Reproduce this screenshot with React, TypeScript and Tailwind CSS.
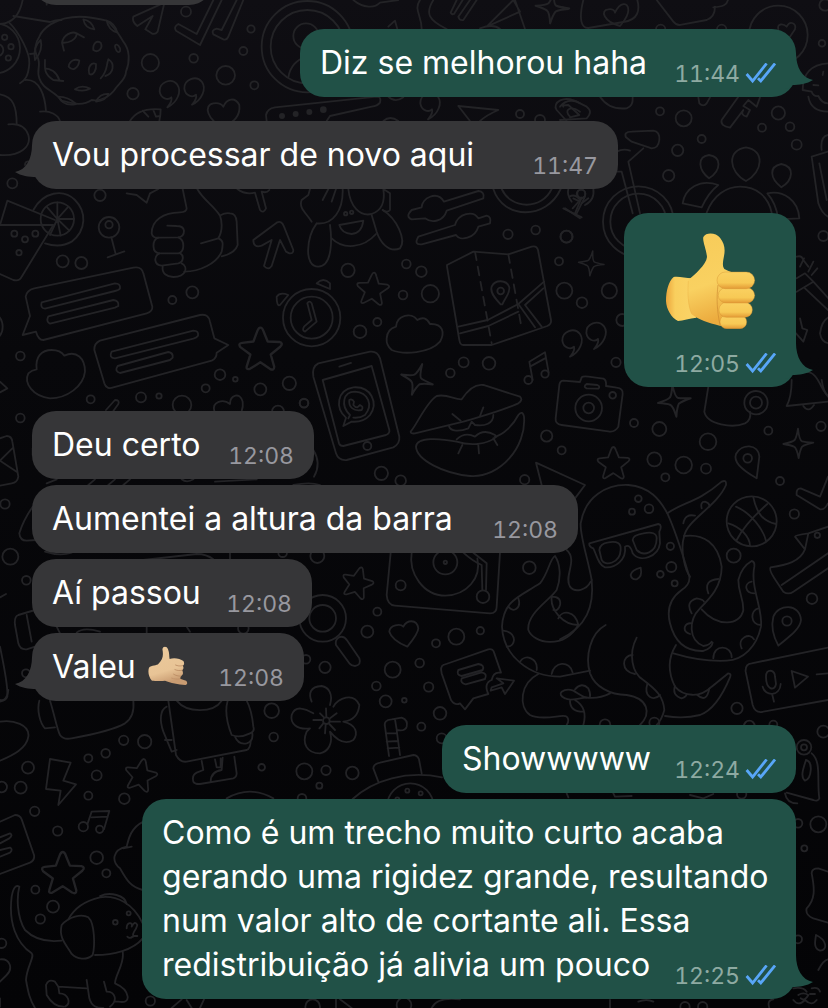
import type { ReactNode } from 'react';

type Dot = [number, number, number];

/* One patch of the wallpaper, drawn on a grid three times finer than the page. */
function Patch({ x, y, dots, lines, children }: { x: number; y: number; dots: Dot[]; lines: string[]; children?: ReactNode }) {
  return (
    <g transform={`translate(${x} ${y}) scale(0.33333)`}>
      {dots.map(([cx, cy, r], i) => (
        <circle key={i} cx={cx} cy={cy} r={r} />
      ))}
      {lines.map((d, i) => (
        <path key={i} d={d} />
      ))}
      {children}
    </g>
  );
}

const STAR = 'M0,-50 Q5,-50 8,-40 L17,-18 L44,-17 Q54,-14 46,-6 L24,12 L32,40 Q32,50 22,45 L0,30 L-24,45 Q-34,48 -31,38 L-23,12 L-46,-5 Q-52,-14 -42,-15 L-16,-18 L-7,-42 Q-4,-50 0,-50 Z';
const SPARK = 'M0,-44 Q4,-8 12,-6 Q20,-4 46,-2 Q20,4 12,10 Q6,20 2,44 Q-4,14 -12,10 Q-20,6 -44,2 Q-16,-4 -10,-10 Q-4,-18 0,-44 Z';
const COMMA = 'M-8,40 C22,26 36,-8 22,-28 C4,-50 -32,-36 -31,-8 C-28,14 -6,20 4,10 C8,22 0,30 -8,40 Z';

function Shape({ d, x, y, r = 0, s = 1 }: { d: string; x: number; y: number; r?: number; s?: number }) {
  return <path d={d} transform={`translate(${x} ${y}) rotate(${r}) scale(${s})`} />;
}

function Wallpaper() {
  return (
    <svg
      aria-hidden="true"
      className="pointer-events-none absolute left-0 top-0"
      width="828"
      height="1008"
      viewBox="0 0 828 1008"
      fill="none"
      stroke="#232326"
      strokeWidth="5.5"
      strokeLinecap="round"
      strokeLinejoin="round"
    >
      {/* cookie, quotes, ticks */}
      <Patch
        x={0}
        y={0}
        dots={[[558, 35, 15], [753, 87, 11], [730, 153, 12], [451, 188, 26], [581, 175, 13], [677, 226, 28], [763, 256, 12], [399, 281, 17], [37, 550, 15], [300, 586, 17], [14, 112, 8], [33, 140, 8], [25, 174, 8], [-15, 145, 75], [-8, 150, 18]]}
        lines={[
          'M118,110 C130,80 170,60 195,55 C240,45 275,52 320,62 C350,85 360,110 370,125 C390,150 390,185 378,215 C378,240 350,255 345,268 C330,290 300,305 275,300 C250,318 220,312 185,302 C160,270 130,270 118,235 C108,210 125,195 112,170 C100,150 108,125 118,110 Z',
          'M250,58 Q275,62 283,88 Q255,85 250,58 Z',
          'M320,62 Q345,70 352,98 Q325,90 320,62 Z',
          'M186,128 C190,105 215,92 230,100 L252,112 M230,100 C230,120 205,130 186,128 L192,152',
          'M280,150 C278,130 290,120 302,128 C310,145 295,160 280,150 Z',
          'M345,140 C345,130 355,132 360,145 C364,160 350,162 345,140 Z',
          'M206,200 C208,182 225,175 238,182 C235,205 218,215 206,200 Z',
          'M268,222 C262,200 275,185 288,192 C290,210 280,228 268,222 Z',
          'M325,178 C345,190 342,220 316,228 M325,178 C318,200 322,215 302,235',
          'M135,180 C135,205 130,220 160,240 L190,243 M135,205 C150,205 170,215 178,240',
          'M225,268 Q245,253 270,266 Q250,277 225,268 Z',
          'M175,290 Q205,290 228,312 Q190,320 175,290 Z',
          'M288,305 Q300,280 326,282 Q318,302 288,305 Z',
          'M105,180 Q98,140 122,120 Q130,150 105,180 Z',
          'M40,48 L150,66 Q165,60 185,60',
          'M25,65 C60,100 90,160 88,190 C85,230 75,240 60,250',
          'M68,0 C60,40 40,70 0,72',
          'M90,162 L108,160',
          'M0,465 C60,470 95,440 85,405 C75,375 50,370 25,373',
          'M50,372 C50,320 40,290 0,283',
          'M75,240 C120,235 135,290 138,333',
          'M120,335 C150,330 175,345 180,363',
          'M665,0 L600,135 L528,92 Q520,80 535,72 L590,102 L640,0',
          'M730,0 L685,110 Q680,122 670,118 L640,103 Q633,90 650,86 L665,90 L710,0',
          'M495,0 L473,95 Q465,105 455,100 L436,88 L458,48 L412,78 Q395,65 400,50 L480,14',
          'M672,382 C620,360 610,315 640,310 C655,308 665,312 670,320 C680,295 705,290 718,315 C722,350 700,365 672,382',
          'M390,363 C410,330 450,325 482,328 Q482,345 478,363 M428,332 L445,350 M460,330 L468,350 L480,348',
          'M140,0 L140,14',
          'M75,495 C75,485 85,480 95,490',
        ]}
      >
        <Shape d={COMMA} x={510} y={282} />
        <Shape d={COMMA} x={584} y={274} />
      </Patch>

      {/* avatar disc, cutlery */}
      <Patch
        x={180}
        y={0}
        dots={[[382, 140, 137], [382, 140, 110], [378, 108, 38], [1020, 342, 12], [1080, 360, 15]]}
        lines={[
          'M325,232 C330,200 350,178 377,172',
          'M262,380 L258,345 Q262,325 285,322 L590,290 Q605,290 600,308 Q592,318 575,320 L450,348 L440,363',
          'M520,0 C550,25 585,25 600,8 L655,0',
          'M720,0 C700,30 725,45 725,87 M760,0 C735,40 745,60 800,87',
          'M830,0 L812,38 Q815,45 822,42 L848,0 M870,0 L835,50 Q838,62 850,60 L890,0',
          'M920,80 L1000,0 L1020,35 Z M1005,0 L1035,87 M900,85 Q940,70 960,87',
          'M625,80 L645,62 L652,87 M625,290 Q645,310 670,292',
          'M835,318 L955,330 Q920,345 900,363 M835,318 L870,363',
          'M1200,310 C1150,280 1115,310 1130,330 L1160,363 M1200,335 C1170,315 1150,330 1170,350',
          'M610,363 Q630,345 655,363',
        ]}
      >
        <g fill="#232326" stroke="none">
          <circle cx="306" cy="348" r="9" />
          <circle cx="347" cy="342" r="9" />
          <circle cx="388" cy="336" r="9" />
          <circle cx="430" cy="329" r="10" />
        </g>
        <Shape d={COMMA} x={752} y={318} />
        <Shape d={SPARK} x={1115} y={22} r={8} s={1.1} />
      </Patch>

      {/* top right */}
      <Patch
        x={560}
        y={0}
        dots={[[786, 130, 10], [795, 15, 17], [302, 88, 14], [485, 88, 14], [371, 355, 24], [300, 334, 12], [655, 339, 20], [606, 383, 12], [690, 380, 13], [425, 417, 12], [353, 451, 17], [710, 434, 15], [326, 527, 17], [20, 710, 18], [655, 105, 88], [790, 708, 15], [63, 582, 13], [235, 665, 106], [235, 665, 84]]}
        lines={[
          'M70,0 C55,60 65,85 85,84 L190,66 C235,60 240,30 232,0',
          'M180,78 C130,65 120,30 145,28 C155,26 165,30 165,38 C180,5 205,5 205,30 C205,50 190,65 180,78 Z',
          'M290,0 L340,65 Q350,78 365,74 L440,60 Q465,50 465,20 M460,22 C490,20 500,15 504,0',
          'M655,88 C650,70 670,70 680,80 C690,60 710,70 705,88 L690,110',
          'M0,20 L28,25',
          'M0,320 Q20,295 50,305 L80,320 Q100,335 80,355 L0,360 M10,320 Q5,315 25,315 L58,345 L30,352',
          'M120,290 C140,320 170,328 200,325 Q220,318 218,292',
          'M415,292 L418,310 Q430,322 440,310 L450,292',
          'M535,290 L485,360 Q480,378 510,383 L550,330 Q540,345 560,350 L570,330 L550,318 L565,300 L590,320 L600,292',
          'M198,412 Q190,395 215,395 L280,392 Q300,395 298,420 Q295,445 275,445 L215,425 Z',
          'M250,445 L205,485 L240,640 M172,515 L185,515 L218,640 M170,455 Q190,445 210,452',
          'M447,535 C415,510 410,470 447,465 C485,470 485,510 447,535 Z',
          'M558,543 C505,515 500,450 558,442 C615,450 610,515 558,543 Z',
          'M664,562 C630,535 625,500 664,492 C705,500 700,540 664,562 Z',
          'M368,610 C375,565 420,535 475,555 C455,570 440,590 425,622 Z',
          'M440,638 C460,585 500,560 540,560 C590,560 625,590 635,638',
          'M622,580 C670,570 715,600 718,655 L655,658 C650,620 640,600 622,580 Z',
          'M728,270 Q728,195 804,190 M728,270 L755,275 Q760,290 775,288 Q785,310 804,310 M745,290 C750,320 770,335 804,335 M790,215 L788,225 M760,255 L775,256',
          'M755,470 L804,455 M755,470 L775,610 Q785,640 804,650 M778,490 L800,600 M785,450 Q780,410 804,405',
          'M28,590 Q45,580 60,600 L38,625 M15,625 L60,655 M75,590 L50,640 M100,565 Q105,600 75,615',
        ]}
      />

      {/* drink, chat cards, cloud */}
      <Patch
        x={0}
        y={180}
        dots={[[188, 244, 18], [244, 249, 18], [517, 360, 12], [577, 337, 18], [61, 528, 13], [272, 658, 12], [423, 652, 15], [477, 648, 8], [546, 675, 28], [617, 625, 12], [660, 584, 16], [706, 598, 7], [781, 628, 18], [868, 610, 20], [912, 669, 13], [834, 695, 18], [61, 714, 13], [43, 161, 9], [75, 178, 9], [106, 161, 9], [57, 218, 8], [327, 142, 31], [327, 134, 11], [172, 117, 50], [935, 413, 86], [935, 413, 63], [-40, 440, 48]]}
        lines={[
          'M0,135 L22,62 L165,120 M0,135 L160,135 L65,290 Q58,305 40,300 L0,282',
          'M100,90 C130,35 190,25 225,60 C260,95 260,150 215,185 Q180,205 135,190',
          'M172,117 L172,67 M172,117 L205,80 M172,117 L222,117 M172,117 L208,152 M172,117 L182,167 M172,117 L150,165 M172,117 L140,80',
          'M334,172 L347,222 M323,232 L373,214',
          'M103,325 L400,263 Q425,258 430,280 L457,380 Q458,395 440,400 L130,480 Q115,480 108,455 L68,465 L90,408 L77,350 Q80,330 103,325 Z',
          'M125,367 L345,310 Q362,310 360,325 Q358,330 345,333 L135,386 Q120,385 125,367 Z',
          'M145,409 L340,360 Q358,362 355,378 L345,383 L150,431 Q137,425 145,409 Z',
          'M300,482 L600,405 Q625,400 630,425 L643,475 L685,495 L650,518 Q650,535 635,542 L340,622 Q320,630 313,610 L283,510 Q282,490 300,482 Z',
          'M335,515 L580,452 Q597,452 594,467 Q590,473 580,476 L345,535 Q325,533 335,515 Z',
          'M353,558 L505,516 Q520,518 518,533 L510,540 L360,579 Q342,573 353,558 Z',
          'M110,568 C105,530 125,510 155,510 C175,510 185,515 193,527 C230,510 255,535 255,575 C250,620 200,655 150,655 C100,650 70,610 85,580 Q95,570 110,568 Z',
          'M380,40 L410,45 L440,68 L450,40 L475,27',
          'M548,27 L560,85 Q560,97 540,97 C490,98 455,120 455,160 Q458,175 475,173 L535,172 Q552,170 552,152 Q550,138 530,138 L502,137',
          'M475,173 C455,180 455,218 478,220 L535,220 C555,215 555,180 535,172',
          'M478,220 C460,230 462,255 485,257 L535,250 C552,245 552,225 540,220',
          'M488,260 C485,280 500,290 520,291 C560,290 565,260 545,250',
          'M553,275 C600,275 650,250 665,215 C670,190 670,180 655,175 L603,190 M655,175 C670,150 665,120 660,107 C640,75 610,60 592,27',
          'M663,105 Q675,98 690,100 Q708,100 710,125 L713,195 Q705,220 665,229',
          'M712,27 Q735,45 765,38 L780,90 Q790,102 798,85 L785,35 Q800,40 808,30',
          'M760,180 L830,128 Q845,120 852,140 L880,210 Q880,222 868,220 L858,215 L840,180 L815,258 Q805,272 792,258 L815,180 L785,197 Q760,205 760,180 Z',
          'M830,350 Q840,335 865,345 L840,375 Q830,380 830,350 Z',
          'M950,310 Q970,290 990,310 L990,327 Z',
          'M922,370 Q928,360 935,370 L950,425 L915,455 Q905,452 912,440 L935,420 Z',
          'M643,693 C635,665 670,655 690,672 C690,645 720,635 728,665 Q730,680 725,693',
          'M318,690 L345,660 Q360,660 355,672 L340,693',
          'M0,605 L22,625 L0,637',
        ]}
      >
        <Shape d={STAR} x={781} y={508} s={1.3} />
      </Patch>

      {/* map, phone, lips, camera */}
      <Patch
        x={300}
        y={170}
        dots={[[144, 301, 20], [319, 282, 13], [364, 305, 16], [391, 371, 26], [309, 375, 13], [180, 485, 19], [232, 456, 12], [624, 193, 14], [707, 180, 13], [799, 200, 18], [777, 274, 12], [793, 362, 24], [846, 398, 16], [928, 362, 23], [967, 450, 18], [948, 577, 14], [491, 577, 15], [451, 609, 13], [567, 580, 19], [12, 700, 13], [740, 798, 17], [785, 841, 12], [202, 828, 12], [866, 714, 40], [866, 714, 16], [938, 676, 10], [602, 363, 10], [844, 71, 12], [137, 131, 5], [155, 127, 5], [685, 630, 12], [735, 612, 11]]}
        lines={[
          'M5,90 L25,75 L30,57 M5,90 C-5,115 20,130 35,155 M50,160 C100,165 130,120 128,57 M50,160 C20,200 10,290 55,290 C100,288 95,200 90,165 M68,90 L85,57 M95,95 L108,57',
          'M145,57 C150,110 180,140 215,132 C250,120 255,90 250,57 L270,70 L270,120 Q262,130 248,120',
          'M248,120 C290,145 320,210 300,235 C265,250 240,215 230,185 L215,135',
          'M95,205 C130,240 190,235 228,192',
          'M118,165 L190,152 Q185,190 155,192 Q125,190 118,165 Z',
          'M335,120 L365,112 C365,85 410,60 432,95 L535,63 Q555,65 550,85 L440,122 C430,155 395,160 375,145 L335,148 Q315,140 335,120 Z',
          'M355,200 L465,165 C475,130 520,120 535,145 L560,137 Q575,140 570,160 L535,170 C525,205 480,215 468,195 L365,223 Q340,225 355,200 Z',
          'M580,57 C610,150 740,150 782,57 M605,57 C635,120 725,120 755,57',
          'M441,285 L520,245 L625,253 L695,230 Q710,226 714,240 L753,450 Q755,462 742,468 L575,525 L490,525 Q480,525 478,510 L441,290 Z',
          'M475,470 L563,450 L655,402 L732,335 M480,490 L565,468 L655,425 M730,355 L675,405 L725,470 M655,402 L705,472',
          'M602,403 C580,380 570,365 575,350 C585,328 620,328 628,352 C630,370 615,385 607,403 Z',
          'M260,505 C262,480 280,472 288,470 C290,435 335,425 352,450 Q375,435 390,462 C430,460 435,490 420,515 C390,550 310,555 275,540 Q258,525 260,505 Z',
          'M55,580 L210,545 Q232,542 240,565 L298,800 Q300,822 280,832 L140,870 Q115,872 108,850 L40,620 Q35,590 55,580 Z',
          'M68,630 L215,588 L268,780 Q270,790 258,795 L130,828 Q120,828 117,820 Z M118,590 L153,579',
          'M130,768 L138,743 C105,715 110,660 160,652 C215,648 235,700 210,735 Q190,758 155,755 Z M145,745 L150,735 C120,705 130,665 165,665 C205,668 220,705 195,735 Q180,745 160,743',
          'M148,690 Q155,685 162,695 L160,705 Q165,712 172,712 L180,705 Q192,710 185,720 C160,725 145,710 148,690 Z',
          'M332,785 C350,765 380,695 410,678 C440,670 465,690 485,688 C500,665 520,640 550,645 L660,680 Q670,690 655,700 C600,725 540,740 490,755 L345,790 Q332,792 332,785 Z',
          'M457,732 L482,752 M550,712 L540,738 M447,768 C450,785 480,785 505,775 L515,755 L525,765 C555,770 580,760 580,735',
          'M470,808 Q495,785 525,800 Q550,775 585,795 M470,815 C510,828 560,825 590,800 M470,815 C420,805 350,800 348,830 C350,870 430,910 510,918 C600,925 680,830 672,740 Q668,720 655,735 C640,765 610,795 585,800 M487,825 L475,850 M535,825 L537,850 M580,805 L592,825',
          'M790,632 L840,636 L845,622 Q850,618 865,620 L910,626 Q920,630 918,648 L950,653 Q970,655 968,672 L955,770 Q945,788 925,784 L785,765 Q765,762 767,745 L778,645 Q780,632 790,632 Z',
          'M860,642 L892,645 Q902,650 895,656 L860,655 Q848,650 860,642 Z',
          'M698,630 L688,575 L735,547 L746,608 M690,590 L735,565',
          'M790,115 L845,142 M845,83 L825,130 M820,85 L840,95 M865,85 L845,100 M805,57 Q800,75 815,95',
          'M708,878 L855,945 L825,985 M708,878 L725,945',
          'M40,840 Q65,880 42,920',
        ]}
      >
        <path d="M525,245 L575,520 M625,253 L665,475" strokeDasharray="26 20" />
        <Shape d={STAR} x={218} y={357} s={0.98} r={5} />
        <Shape d={SPARK} x={873} y={280} s={0.85} r={8} />
        <Shape d={SPARK} x={350} y={628} s={1.1} r={20} />
        <Shape d={COMMA} x={818} y={520} />
        <Shape d={COMMA} x={890} y={497} />
      </Patch>

      {/* right edge between the bubbles */}
      <Patch
        x={600}
        y={200}
        dots={[[720, 265, 25]]}
        lines={[
          'M590,170 Q605,165 610,180 L625,200 M600,200 L612,175 M625,215 L640,185 M635,225 L652,205 M590,235 L615,220 L640,245 L590,275 M640,245 L690,300 M615,265 L684,330',
          'M600,355 L607,385 L622,390 L610,425 L588,400',
          'M660,400 Q665,360 690,350 M660,400 Q665,430 690,430',
          'M612,515 C660,510 660,580 690,590',
        ]}
      />

      {/* octopus, ball, shoe */}
      <Patch
        x={560}
        y={380}
        dots={[[222, 129, 12], [298, 147, 21], [283, 238, 21], [371, 255, 25], [316, 292, 12], [438, 266, 15], [444, 185, 25], [625, 152, 12], [783, 139, 14], [660, 303, 12], [703, 402, 14], [235, 356, 10], [267, 386, 13], [216, 395, 9], [331, 499, 11], [334, 561, 15], [301, 583, 10], [344, 610, 9], [521, 527, 21], [756, 656, 16], [563, 235, 13], [681, 723, 14], [531, 985, 17], [588, 68, 35], [588, 68, 18], [575, 424, 75]]}
        lines={[
          'M445,20 L433,95 C440,135 520,145 555,130 Q575,120 570,95',
          'M695,0 Q695,50 680,78 L804,65 M730,78 Q745,100 762,75 M785,0 Q790,35 804,50',
          'M590,295 C540,265 520,245 528,222 C545,190 595,190 598,230 Z',
          'M655,797 C635,760 635,730 640,710 C655,670 720,670 723,720 C720,750 680,775 655,797 Z',
          'M528,380 C575,400 610,450 618,482 M580,352 C590,400 610,425 648,432 M622,372 C590,400 550,440 530,480 M505,430 C540,440 570,470 570,498',
          'M95,600 C85,540 60,470 62,430 C75,350 140,312 205,315 C270,320 300,360 322,400 C350,460 370,530 388,590 C390,610 380,620 365,630 C330,655 320,690 330,730 C345,790 380,815 430,813 Q455,805 458,788',
          'M322,400 C370,365 410,370 485,305 Q500,298 498,315 C470,380 380,420 372,470',
          'M372,468 C430,460 475,490 485,560 C485,620 450,655 420,685 C385,720 385,780 430,798 Q450,795 455,785',
          'M372,470 C360,510 375,570 390,590',
          'M425,688 C470,740 540,740 550,690 C550,650 535,640 535,600 Q545,560 575,543 Q585,545 583,560 C570,620 610,690 603,740 C590,800 550,840 500,842 C440,845 390,835 340,820',
          'M348,795 C320,840 325,880 345,920 C370,950 420,955 455,920 L505,880 Q515,880 510,892 C490,940 460,990 420,1005 Q370,1018 315,1008',
          'M88,490 L295,432 Q308,435 298,455 L300,490 C295,530 240,550 218,520 Q210,490 195,500 C200,540 165,565 135,562 C115,555 110,525 100,505 Q86,500 88,490 Z',
          'M118,510 Q120,490 145,487 Q185,480 182,510 C180,550 135,560 125,540 Z M218,480 Q218,465 250,460 Q290,452 290,475 C290,520 250,530 230,510 Z',
          'M212,585 Q215,570 242,563 Q248,590 230,598 Q215,600 212,585 Z',
          'M95,600 C103,680 80,740 0,778',
          'M137,735 C90,760 75,830 90,880 C105,920 150,945 200,945 C265,955 275,1000 240,1035',
          'M230,773 C205,820 215,880 250,900 C290,930 310,950 313,990 Q305,1020 290,1035',
          'M218,825 C185,825 180,875 225,882 M262,912 C250,950 280,965 300,945 M345,918 Q335,945 365,955 Q380,950 380,942 M412,945 Q440,970 448,925',
          'M370,430 Q375,400 405,407 M425,385 Q420,365 435,365 Q450,370 448,380 M445,640 Q430,600 475,597 M395,700 Q375,665 410,655 Q430,658 432,665 M390,762 Q370,755 375,740 Q380,728 395,730 M460,835 C460,790 515,795 515,832 M545,805 C530,775 570,755 582,778 M603,735 C570,735 570,690 595,685 M583,640 C555,640 550,610 575,605',
          'M150,940 C125,953 95,955 75,952',
          'M804,440 L745,460 Q705,465 705,470 L735,508 L745,460 M735,508 C720,545 680,555 632,562 Q625,570 650,605 L670,635 Q685,645 700,635 L804,565 M665,615 L804,520',
          'M710,345 L780,388 Q795,390 804,370 M710,345 Q708,325 722,325 L780,350 L804,290',
          'M804,803 L575,850 Q555,852 557,875 L578,975 Q585,998 605,996 L804,960',
          'M618,890 Q618,872 632,872 Q645,875 645,890 L648,912 Q645,928 632,925 Q618,918 618,890 Z M608,920 C615,950 660,950 662,912 M637,945 L642,965 M695,873 L744,890 L705,923 Z M770,883 L804,880',
        ]}
      >
        <circle cx="772" cy="466" r="8" />
        <Shape d={STAR} x={160} y={250} s={0.98} />
        <Shape d={SPARK} x={342} y={62} s={1.1} r={-6} />
        <Shape d={SPARK} x={714} y={190} />
      </Patch>

      {/* left margin */}
      <Patch
        x={0}
        y={370}
        dots={[[15, 402, 14], [31, 560, 24], [79, 631, 13], [968, 745, 70], [968, 745, 40], [918, 868, 13], [78, 910, 12], [730, 775, 16], [848, 548, 13]]}
        lines={[
          'M0,205 L20,198 Q35,198 37,215 L55,320 Q52,338 35,340 L0,347 M40,232 L0,272 L50,305 M98,235 L98,255',
          'M98,410 Q70,450 58,490 Q60,512 80,512 L110,510',
          'M140,340 L170,328 M265,345 L285,328 M325,345 L345,328 M370,345 L390,328 M545,328 Q560,340 580,328 M645,335 L770,328 M880,345 Q930,335 960,345',
          'M135,545 Q180,560 215,548 M430,570 L590,552 Q620,552 640,568 M690,548 L690,568',
          'M0,682 L18,672 M105,720 L55,735 Q42,740 45,765 L55,820 Q60,840 80,838 L105,830 M80,735 L95,815',
          'M170,770 L180,790 M230,788 Q250,770 300,785 M440,770 L440,788 M560,770 L570,785',
          'M0,830 Q25,950 22,980 Q20,990 0,995',
        ]}
      />

      {/* turntable, magnifier, tentacle */}
      <Patch
        x={300}
        y={450}
        dots={[[244, 70, 20], [302, 92, 16], [674, 89, 14], [302, 406, 15], [52, 318, 21], [688, 353, 19], [232, 485, 12], [202, 545, 18], [408, 580, 12], [469, 560, 24], [541, 542, 11], [359, 639, 13], [278, 659, 24], [75, 652, 17], [386, 711, 14], [229, 708, 13], [436, 337, 36], [436, 337, 5], [549, 440, 19]]}
        lines={[
          'M272,308 L260,435 Q262,465 285,467 L570,490 Q590,490 590,470 L600,308',
          'M335,308 C325,370 370,437 436,437 C500,435 545,385 532,325',
          'M490,308 Q520,335 545,345 L547,420 M520,308 L560,340 L558,420',
          'M115,563 Q130,555 142,572 L178,625 Q185,645 165,648 Q155,648 148,640 L108,585 Q105,570 115,563 Z',
          'M322,590 Q275,570 268,545 C270,525 300,520 310,530 C320,510 350,505 355,535 Q355,550 322,590 Z',
          'M430,645 L565,598 Q580,595 583,610 L603,668 M430,645 Q420,650 425,670 L453,750 Q465,768 480,760 L495,778 L520,745 L565,732 Q550,700 575,690 Q580,665 600,668',
          'M475,660 L535,642 Q555,645 548,660 L485,678 Q468,675 475,660 Z M485,685 L545,667 Q563,670 555,687 L497,703 Q480,700 485,685 Z',
          'M575,712 L610,700 L590,685 L642,692 L615,732 L605,712 L572,722 Z',
          'M835,525 C790,600 700,580 685,540 C680,490 750,450 770,420 C785,380 780,340 765,318 C750,325 745,370 720,400 C660,440 610,450 606,530 C610,620 690,680 780,680 L870,662',
          'M800,300 C835,330 790,380 810,410 C825,430 860,420 872,395',
          'M625,470 C640,490 665,475 655,445 M610,542 Q640,545 642,570 Q640,590 620,590 M660,635 C675,610 715,625 710,660 M755,672 C760,635 810,630 818,668 M755,440 Q785,440 780,465 Q775,485 760,480 M775,505 C785,480 825,480 835,525 C790,525 750,480 755,440',
          'M715,672 C660,700 655,770 690,795 C730,815 790,790 800,800 Q810,810 800,825 M855,743 C830,745 810,755 795,745 Q775,735 785,725 Q800,715 820,722 C835,730 845,740 860,743 M825,718 Q845,695 865,715 Q872,730 870,740 M810,752 Q810,785 850,785 M825,750 C850,765 860,790 850,825',
        ]}
      >
        <Shape d={STAR} x={172} y={398} s={0.95} r={15} />
      </Patch>

      {/* lower left: robot, flower, puppy */}
      <Patch
        x={0}
        y={690}
        dots={[[84, 233, 18], [5, 291, 16], [62, 293, 18], [265, 205, 12], [317, 190, 13], [371, 151, 14], [434, 155, 20], [290, 256, 15], [265, 317, 12], [373, 326, 16], [104, 364, 14], [173, 423, 14], [290, 503, 19], [319, 550, 12], [106, 599, 12], [159, 650, 18], [121, 687, 14], [815, 62, 22], [821, 141, 13], [785, 232, 10], [913, 244, 24], [978, 241, 14], [1057, 249, 19], [958, 287, 9], [906, 325, 13], [1157, 34, 18], [1213, 31, 7], [1264, 110, 12], [1320, 70, 19], [1325, 145, 15], [979, 92, 10], [451, 933, 14], [346, 697, 7], [386, 670, 6], [5, 760, 14], [1231, 350, 70], [1222, 302, 6], [1262, 310, 6], [1192, 328, 6], [1212, 945, 22], [938, 950, 22], [250, 410, 14], [299, 418, 11]]}
        lines={[
          'M0,95 C40,88 90,105 85,140 C80,175 40,195 0,212',
          'M118,32 C110,60 120,100 135,115 L165,112 M150,32 C165,80 170,115 180,135 Q190,150 215,145 C270,135 340,120 375,100 Q405,80 400,32',
          'M0,30 Q20,35 25,0',
          'M150,207 L212,218 L190,272 L228,283 L175,345 L182,302 L138,297 Z',
          'M262,403 L275,365 L328,363 L312,418 M275,382 L322,380',
          'M0,395 L45,375 Q60,375 65,388 L102,495 Q105,510 90,518 L0,552 M0,460 L28,445 Q40,435 30,430 L0,442 M0,500 L30,488 Q40,478 30,473 L0,480',
          'M505,32 L528,195 Q540,218 560,215 L740,180 Q752,175 752,152 M500,50 C480,60 478,90 490,125 L515,185 L530,180 M495,150 L515,150',
          'M530,32 C560,70 640,70 665,32 M683,32 C672,70 685,110 695,135 Q720,145 750,130 Q765,125 760,110 Q755,60 740,32 M705,140 Q715,165 740,160 Q760,155 757,130',
          'M605,213 L610,240 L590,248 Q575,255 580,275 Q585,283 600,282 L700,265 Q710,262 710,250 L703,200 M645,208 L650,232 L662,232 L662,205 M632,275 Q632,245 665,240 L668,203',
          'M935,35 C925,10 930,-10 965,-12 C985,-8 1000,10 990,45 M1000,50 C1015,25 1060,5 1078,45 C1075,80 1055,92 1030,95 C1070,105 1075,130 1060,150 C1035,165 1010,150 990,125 C1000,160 985,185 960,190 C920,190 905,160 920,125 L930,115 C890,120 870,100 875,75 C885,45 915,55 940,70 M940,90 L965,90 M960,70 L972,82 M978,55 L979,80 M1010,70 L990,85 M1020,95 L992,95 M1005,120 L988,102 M975,130 L977,105 M958,115 L970,100',
          'M1155,110 Q1150,90 1175,88 L1205,83 Q1225,90 1220,110 Q1215,125 1190,120 L1200,195 M1155,110 L1167,198 M1185,88 L1190,118 M1158,130 L1190,130 M1160,155 L1195,153 M1163,175 L1198,173',
          'M1135,275 L1120,235 Q1120,222 1140,218 L1240,195 Q1252,195 1257,208 L1265,250 M1058,327 C1120,270 1220,240 1326,262',
          'M680,325 Q750,285 820,325 M430,395 C390,415 385,450 380,470 C335,480 335,515 360,535 C380,570 390,590 428,600 M370,475 L395,470',
          'M58,590 Q42,580 35,620 C25,700 50,760 95,790 C105,800 80,830 78,870 C85,910 90,930 105,954 M58,590 C50,620 50,680 75,720 C110,755 160,755 185,752',
          'M205,688 C225,650 265,630 300,622 C350,615 400,640 428,700 M300,618 C330,605 375,615 380,642',
          'M185,705 C205,680 245,670 265,682 C285,700 285,770 278,795 C260,812 230,808 215,792 C200,765 175,745 185,705 Z',
          'M285,795 C340,795 400,780 428,745 M380,715 C380,695 400,695 395,710 Q405,690 412,705 C405,730 395,725 400,740 M382,740 Q390,748 400,738 L412,738',
          'M368,785 C375,820 345,855 345,880 Q380,895 383,920 Q385,940 355,935 L345,935 M260,870 L268,925 C275,950 290,954 310,954 M312,875 L320,905 C345,905 355,930 330,950',
          'M138,885 Q145,865 165,875 L175,890 L260,895 M138,885 L140,915 Q160,950 190,950 M175,890 L178,910 C205,910 215,940 195,950',
          'M0,808 C30,805 40,835 20,855 L0,875 M0,925 L0,950 M515,954 L545,928 M560,930 L575,954 M600,954 L612,928 M1008,928 L1008,954 M1020,928 L1055,954 M1295,954 Q1310,920 1380,928',
        ]}
      >
        <Shape d={STAR} x={422} y={255} s={0.98} r={12} />
        <Shape d={STAR} x={188} y={550} s={1.28} />
      </Patch>

      {/* lower right */}
      <Patch
        x={560}
        y={690}
        dots={[[790, 125, 18], [732, 172, 22], [732, 172, 9], [775, 403, 24], [733, 475, 9], [714, 400, 13], [714, 748, 12], [568, 108, 16], [640, 104, 12], [283, 98, 15], [135, 104, 16], [375, 950, 14], [428, 950, 14], [545, 312, 14]]}
        lines={[
          'M755,190 C785,215 770,270 778,325 Q775,335 760,330 L680,308 M738,210 C760,215 755,265 735,272 C720,260 730,235 738,210 M675,310 Q680,340 712,340',
          'M804,545 L775,535 Q755,535 755,550 C765,600 765,630 740,655 Q735,675 760,685 L804,698',
          'M768,735 C800,750 805,780 780,782 C760,775 765,755 768,735 Z',
          'M775,840 Q790,810 804,808 M640,928 Q620,930 628,954 M700,895 Q730,890 740,905 M715,915 Q730,905 745,915 Q735,935 722,925 M755,895 Q775,890 780,905 M700,930 Q715,950 735,930 M735,930 Q755,950 770,930 M750,912 L765,912',
          'M390,315 L430,325 L460,312 M20,310 L25,322 M160,310 L165,320 L215,318 M150,930 L150,954 M235,935 Q260,925 280,935',
        ]}
      />
    </svg>
  );
}

function Ticks() {
  return (
    <svg role="img" aria-label="Lida" className="h-[22px] w-8 shrink-0" viewBox="0 1 32 22" fill="none" stroke="#58a6f8" strokeWidth="2.8">
      <path d="M2.6,12 L8.6,19 L22.6,1.5" />
      <path d="M14,16.2 L16.8,19 L31,1.5" />
    </svg>
  );
}

function ThumbsUp() {
  return (
    <svg role="img" aria-label="👍" className="h-24 w-[92px]" viewBox="196 96 270 288">
      <defs>
        <linearGradient id="palm" x1="0" y1="0" x2="0.2" y2="1">
          <stop offset="0" stopColor="#f7cb59" />
          <stop offset="0.6" stopColor="#f9d161" />
          <stop offset="1" stopColor="#ecab3e" />
        </linearGradient>
        <linearGradient id="finger" x1="0" y1="0" x2="0" y2="1">
          <stop offset="0" stopColor="#fad161" />
          <stop offset="0.65" stopColor="#f7c955" />
          <stop offset="1" stopColor="#e39a35" />
        </linearGradient>
        <linearGradient id="cuff" x1="0" y1="0" x2="1" y2="0">
          <stop offset="0" stopColor="#eca63c" />
          <stop offset="0.3" stopColor="#f9cf5e" />
          <stop offset="1" stopColor="#fad468" />
        </linearGradient>
      </defs>
      <path d="M222,228 C232,225 258,230 276,232 L290,350 C270,352 250,358 235,360 C215,350 200,325 199,300 C199,270 207,240 222,228 Z" fill="url(#cuff)" />
      <path d="M266,236 C285,222 320,190 322,168 C320,145 308,120 311,108 C320,92 350,96 361,110 C375,128 377,145 373,165 C370,182 367,195 374,204 C390,212 410,218 420,230 L420,360 C405,374 385,378 360,374 C325,366 298,356 276,340 C262,310 262,262 266,236 Z" fill="url(#palm)" />
      <path d="M266,240 C264,275 264,312 276,338" fill="none" stroke="#e9ad43" strokeWidth="3" opacity="0.35" />
      <g fill="url(#finger)" stroke="#d58f31" strokeOpacity="0.6" strokeWidth="2">
        <rect x="361" y="342" width="80" height="41" rx="20" />
        <rect x="358" y="304" width="100" height="45" rx="22" />
        <rect x="356" y="260" width="109" height="46" rx="23" />
        <rect x="352" y="213" width="113" height="50" rx="25" />
      </g>
      <path d="M355,252 C350,290 352,330 361,372" fill="none" stroke="#c9872f" strokeWidth="3" opacity="0.6" />
    </svg>
  );
}

function CallMe() {
  return (
    <svg role="img" aria-label="🤙🏼" className="ml-3 inline-block h-10 w-10 align-[-8px]" viewBox="52 46 122 122">
      <defs>
        <linearGradient id="skin" x1="0" y1="0" x2="0.3" y2="1">
          <stop offset="0" stopColor="#ecca9c" />
          <stop offset="0.7" stopColor="#e8c496" />
          <stop offset="1" stopColor="#c99c72" />
        </linearGradient>
      </defs>
      <path
        d="M55,112 C62,104 80,106 84,100 C96,88 100,78 96,56 C97,46 110,46 113,56 C118,68 116,78 118,86 C130,80 150,84 160,92 C164,100 162,104 158,106 C162,112 160,118 156,120 C160,126 160,134 152,138 L150,146 L168,152 C173,156 173,164 166,165 C145,164 120,158 104,152 C90,154 70,152 64,152 C54,140 51,125 55,112 Z"
        fill="url(#skin)"
      />
      <g fill="none" stroke="#b98a62" strokeWidth="2.5" strokeLinecap="round">
        <path d="M136,104 C142,107 150,108 158,106" />
        <path d="M134,118 C140,121 148,122 156,120" />
        <path d="M130,132 C136,136 144,138 152,138" />
        <path d="M124,144 C132,147 142,148 150,146" opacity="0.7" />
      </g>
    </svg>
  );
}

function Time({ value, read = false }: { value: string; read?: boolean }) {
  return (
    <span className={`flex items-center gap-1 text-[23px] leading-[22px] tabular-nums ${read ? 'text-[#8eaaa2]' : 'text-[#98989f]'}`}>
      <time>{value}</time>
      {read && <Ticks />}
    </span>
  );
}

function Tail({ side }: { side: 'in' | 'out' }) {
  return (
    <svg
      aria-hidden="true"
      className={side === 'out' ? 'absolute -right-[17px] bottom-2 h-9 w-7 text-[#215147]' : 'absolute -left-[17px] bottom-2 h-9 w-7 -scale-x-100 text-[#363638]'}
      viewBox="0 0 28 36"
    >
      <path d="M0,0 H11 C11,14 17,25 28,27 C22,31 14,32 7,32 C5,35 3,36 0,36 Z" fill="currentColor" />
    </svg>
  );
}

type BubbleProps = { side: 'in' | 'out'; time: string; width: string; tail?: boolean; first?: boolean; children: ReactNode };

function Bubble({ side, time, width, tail, first, children }: BubbleProps) {
  const out = side === 'out';
  return (
    <li className={`flex ${out ? 'justify-end' : 'justify-start'} ${first ? 'mt-6' : 'mt-1.5'}`}>
      <div className={`relative flex items-end justify-between rounded-3xl px-5 py-3 ${out ? 'bg-[#215147]' : 'bg-[#363638]'} ${width}`}>
        <p className="whitespace-nowrap text-[32px] leading-11 text-white">{children}</p>
        <Time value={time} read={out} />
        {tail && <Tail side={side} />}
      </div>
    </li>
  );
}

export default function App() {
  return (
    <main className="relative min-h-screen overflow-hidden bg-linear-to-b from-[#0f0e13] via-[#08080b] via-35% to-[#040406] font-['Inter',sans-serif]">
      <Wallpaper />
      <ol className="relative px-8 pb-2">
        <li className="flex h-[5px] items-end">
          <div className="h-16 w-[181px] shrink-0 rounded-3xl bg-[#363638]" />
        </li>
        <Bubble side="out" time="11:44" width="min-w-[496px]" tail first>Diz se melhorou haha</Bubble>
        <Bubble side="in" time="11:47" width="min-w-[586px]" tail first>Vou processar de novo aqui</Bubble>
        <li className="mt-6 flex justify-end">
          <div className="relative flex min-w-[172px] flex-col items-center gap-6 rounded-3xl bg-[#215147] px-5 pb-3 pt-5">
            <ThumbsUp />
            <div className="self-end">
              <Time value="12:05" read />
            </div>
            <Tail side="out" />
          </div>
        </li>
        <Bubble side="in" time="12:08" width="min-w-[282px]" first>Deu certo</Bubble>
        <Bubble side="in" time="12:08" width="min-w-[546px]">Aumentei a altura da barra</Bubble>
        <Bubble side="in" time="12:08" width="min-w-[280px]">Aí passou</Bubble>
        <Bubble side="in" time="12:08" width="min-w-[272px]" tail>
          Valeu
          <CallMe />
        </Bubble>
        <Bubble side="out" time="12:24" width="min-w-[354px]" first>Showwwww</Bubble>
        <li className="mt-1.5 flex justify-end">
          <div className="relative min-w-[654px] rounded-3xl bg-[#215147] px-5 py-3">
            <p className="text-[32px] leading-11 text-white">
              Como é um trecho muito curto acaba
              <br />
              gerando uma rigidez grande, resultando
              <br />
              num valor alto de cortante ali. Essa
              <br />
              redistribuição já alivia um pouco
              <span className="float-right pt-[22px]">
                <Time value="12:25" read />
              </span>
            </p>
            <Tail side="out" />
          </div>
        </li>
      </ol>
    </main>
  );
}
